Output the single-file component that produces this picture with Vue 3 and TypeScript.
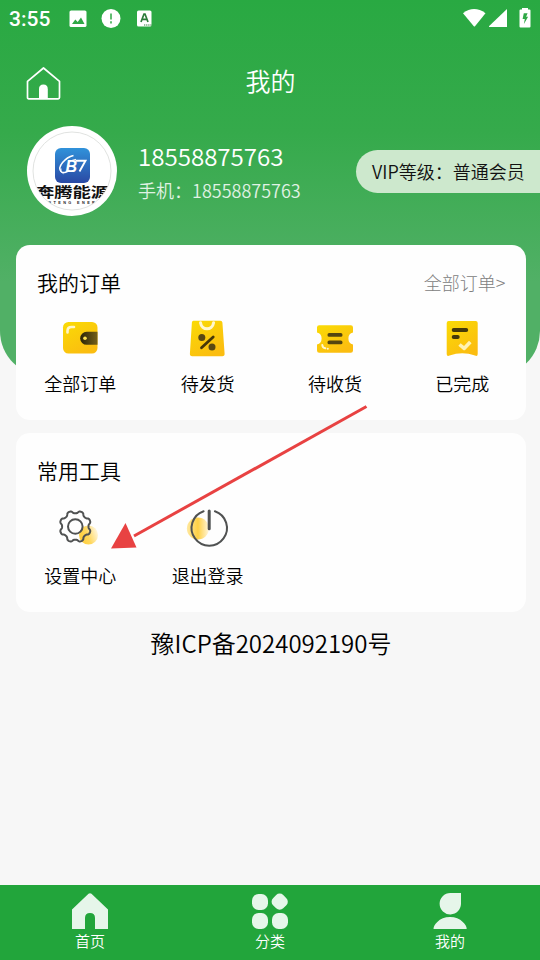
<script setup lang="ts">
interface Entry {
  id: string
  label: string
}

const phone: string = '18558875763'
const orders: Entry[] = [
  { id: 'all', label: '全部订单' },
  { id: 'ship', label: '待发货' },
  { id: 'receive', label: '待收货' },
  { id: 'done', label: '已完成' },
]
const tools: Entry[] = [
  { id: 'settings', label: '设置中心' },
  { id: 'logout', label: '退出登录' },
]
const tabs: Entry[] = [
  { id: 'home', label: '首页' },
  { id: 'category', label: '分类' },
  { id: 'mine', label: '我的' },
]

// Outline of an eight-lobed gear centred on the origin
function gearOutline(): string {
  const points: string[] = []
  for (let i = 0; i < 144; i++) {
    const a = (i / 144) * Math.PI * 2
    const wave = -Math.cos(8 * a)
    const r = 14.5 + 1.4 * Math.tanh(1.6 * wave)
    points.push(`${(r * Math.cos(a)).toFixed(2)} ${(r * Math.sin(a)).toFixed(2)}`)
  }
  return `M${points.join('L')}z`
}
const gear: string = gearOutline()
</script>

<template>
  <div class="page">
    <svg class="defs" width="0" height="0" aria-hidden="true">
      <defs>
        <linearGradient id="gold" x1="0" y1="0" x2="0.6" y2="1">
          <stop offset="0" stop-color="#fadb05" />
          <stop offset="1" stop-color="#fbbd10" />
        </linearGradient>
        <linearGradient id="dark" x1="0" y1="0" x2="1" y2="0">
          <stop offset="0" stop-color="#2b2508" />
          <stop offset="1" stop-color="#75601a" />
        </linearGradient>
        <linearGradient id="glow" x1="0" y1="0.7" x2="1" y2="0.3">
          <stop offset="0" stop-color="#ffcd35" />
          <stop offset="0.45" stop-color="#ffd75c" />
          <stop offset="1" stop-color="#fff8e4" />
        </linearGradient>
        <linearGradient id="glowLeft" x1="0" y1="0" x2="1" y2="0">
          <stop offset="0" stop-color="#ffe9a2" />
          <stop offset="0.5" stop-color="#ffd044" />
          <stop offset="1" stop-color="#fff6dd" />
        </linearGradient>
        <linearGradient id="brand" x1="0" y1="0" x2="0" y2="1">
          <stop offset="0" stop-color="#3092da" />
          <stop offset="1" stop-color="#2a49a4" />
        </linearGradient>
      </defs>
    </svg>

    <header class="hero">
      <div class="status">
        <span class="clock">3:55</span>
        <svg class="st-image" width="18" height="18" viewBox="0 0 18 18">
          <rect x="0.5" y="0.5" width="17" height="16.5" rx="1.6" fill="#fff" />
          <path d="M3 14l3.3-4.6 2.4 2.7 3.3-4.5 3.5 6.4z" fill="#2fa846" />
        </svg>
        <svg class="st-alert" width="20" height="20" viewBox="0 0 20 20">
          <circle cx="10" cy="9.5" r="9.5" fill="#fff" />
          <path d="M10 4.500v6M10 12.300v2.200" stroke="#62bd72" stroke-width="2" />
        </svg>
        <svg class="st-font" width="16" height="18" viewBox="0 0 16 18">
          <rect x="0" y="0.500" width="14.500" height="16" rx="1.600" fill="#fff" />
          <path d="M4 12l3-8h1l3 8M5.200 9.300h4.600" fill="none" stroke="#2d7c3b" stroke-width="1.700" />
          <path d="M7 15h7.500" stroke="#2d7c3b" stroke-width="1" stroke-dasharray="1.300 0.800" />
        </svg>
        <span class="grow"></span>
        <svg width="24" height="20" viewBox="0 0 24 20">
          <path d="M0 4.200Q11-4.200 22.500 4.200L12 17.200q-.6.700-1.200 0z" fill="#fff" />
        </svg>
        <svg class="st-signal" width="19" height="19" viewBox="0 0 19 19">
          <path d="M18 0V18H.2q-.700-.400 0-1.100z" fill="#fff" />
        </svg>
        <svg class="st-battery" width="12" height="21" viewBox="0 0 12 21">
          <path d="M3 1.500V0h6v1.500h1.500q1 0 1 1v16q0 1-1 1h-9q-1 0-1-1v-16q0-1 1-1z" fill="#fff" />
          <path d="M4.800 5.200h3.800L7.100 8.700h2L4.900 16l.9-5H3.600z" fill="#2fa846" />
        </svg>
      </div>

      <div class="title-bar">
        <svg class="home" width="36" height="36" viewBox="0 0 36 36">
          <path d="M2.500 15.300 18.500 2l16 13.300V31.500q0 1.300-1.300 1.300H3.800q-1.300 0-1.300-1.300z" fill="none" stroke="#fff" stroke-width="1.700" stroke-linejoin="round" />
          <path d="M14 33V23.200q0-4.600 4.400-4.600t4.400 4.600V33z" fill="#fff" />
        </svg>
        <h1>我的</h1>
      </div>

      <div class="profile">
        <div class="avatar">
          <svg width="90" height="90" viewBox="0 0 90 90">
            <defs><clipPath id="face"><circle cx="45" cy="45" r="38.7" /></clipPath></defs>
            <circle cx="45" cy="45" r="45" fill="#fff" />
            <circle cx="45" cy="45" r="39" fill="none" stroke="#d3d6d3" stroke-width="0.7" />
            <g clip-path="url(#face)">
              <rect x="28" y="22" width="35" height="35" rx="6" fill="url(#brand)" />
              <path d="M46.500 29.500C38 31.500 30 41 34 45.500c2.500 2.600 7 0 8.500-1.500" fill="none" stroke="#fff" stroke-width="1.500" />
              <text x="38.500" y="46" class="mono">B</text>
              <path d="M48.500 34.700H58.500L52.500 45.500" fill="none" stroke="#fff" stroke-width="1.900" />
              <path d="M41 35.500l8-2.200M34 42.500q-1.500 3.500 2.500 5.200" fill="none" stroke="#fff" stroke-width="1" />
              <text transform="translate(45.500 71.200) scale(1 0.76)" class="brand-name">奔腾能源</text>
              <text x="46" y="78" class="brand-sub">ENTENG ENERG</text>
            </g>
          </svg>
        </div>
        <div class="who">
          <div class="name">{{ phone }}</div>
          <div class="phone">手机：{{ phone }}</div>
        </div>
        <div class="vip">VIP等级：普通会员</div>
      </div>
    </header>

    <main>
      <section class="card orders">
        <div class="card-head">
          <h2>我的订单</h2>
          <span class="more">全部订单&gt;</span>
        </div>
        <div class="grid">
          <div v-for="item in orders" :key="item.id" class="cell">
            <svg v-if="item.id === 'all'" width="40" height="40" viewBox="0 0 40 40">
              <rect x="3" y="4" width="34.500" height="31.500" rx="5.500" fill="url(#gold)" />
              <path d="M37.500 13.800H26.700a6.500 6.500 0 0 0 0 13h10.800z" fill="url(#dark)" />
              <circle cx="25" cy="20.300" r="1.800" fill="#ffe352" />
              <path d="M7.500 14.500v-1.600q0-3.900 4-3.900H14" fill="none" stroke="#fff6c8" stroke-width="2.600" stroke-linecap="round" />
            </svg>
            <svg v-else-if="item.id === 'ship'" width="40" height="40" viewBox="0 0 40 40">
              <path d="M5.400 2.800h27q1.800 0 2 1.800l2.200 31q.2 2.700-2.300 2.700H4.200q-2.500 0-2.300-2.700l2-31q.1-1.800 1.500-1.800z" fill="url(#gold)" />
              <path d="M12.500 4.800c1.200 8 11.800 8 13.100 0" fill="none" stroke="#fff7d0" stroke-width="3" stroke-linecap="round" />
              <circle cx="13.800" cy="19.600" r="3.500" fill="#594813" />
              <circle cx="24" cy="29" r="3.500" fill="#594813" />
              <path d="M13.500 29.700 25.200 19" stroke="#453709" stroke-width="2.800" stroke-linecap="round" />
            </svg>
            <svg v-else-if="item.id === 'receive'" width="40" height="40" viewBox="0 0 40 40">
              <path d="M4.200 7.300h31.600q2.200 0 2.200 2.200v5.100q-4.600 1-4.600 5.900t4.600 5.900v6.100q0 2.200-2.200 2.200H4.200Q2 34.700 2 32.500v-6.100q4.600-1 4.600-5.900T2 14.600V9.500q0-2.200 2.200-2.200z" fill="url(#gold)" />
              <path d="M14.300 16.900h11.400M14.300 24.400h11.400" stroke="#544510" stroke-width="3.700" stroke-linecap="round" />
              <path d="M7.300 27q.3 3 3 3.300" fill="none" stroke="#fff8cf" stroke-width="2" stroke-linecap="round" />
              <circle cx="12.800" cy="30.700" r="1" fill="#fff8cf" />
            </svg>
            <svg v-else width="40" height="40" viewBox="0 0 40 40">
              <path d="M6.700 3h27q2 0 2 2v31q0 2.800-2.700 1.600-12.800-4.800-25.400 0-2.900 1.100-2.900-1.600V5q0-2 2-2z" fill="url(#gold)" />
              <path d="M11.700 12h12.500M11.700 18.900h4" stroke="#453909" stroke-width="4" stroke-linecap="round" />
              <path d="m17.500 26.500 4.600 3.900 6.200-6.500" fill="none" stroke="#fff2b5" stroke-width="3.600" stroke-linejoin="round" />
            </svg>
            <span>{{ item.label }}</span>
          </div>
        </div>
      </section>

      <section class="card tools">
        <div class="card-head"><h2>常用工具</h2></div>
        <div class="grid">
          <div v-for="item in tools" :key="item.id" class="cell">
            <svg v-if="item.id === 'settings'" width="44" height="42" viewBox="0 0 44 42">
              <circle cx="30.500" cy="28" r="9.500" fill="url(#glow)" />
              <path transform="translate(17.300 19.500)" :d="gear" fill="none" stroke="#505252" stroke-width="2" stroke-linejoin="round" />
              <circle cx="17.300" cy="19.500" r="7.300" fill="none" stroke="#505252" stroke-width="2" />
            </svg>
            <svg v-else width="44" height="42" viewBox="0 0 44 42">
              <circle cx="11.900" cy="21.500" r="11" fill="url(#glowLeft)" />
              <path d="M17.600 4.200A17.700 17.700 0 1 0 28.900 4.200" fill="none" stroke="#505252" stroke-width="2" stroke-linecap="round" />
              <path d="M23.200 4v17.800" stroke="#505252" stroke-width="3" stroke-linecap="round" />
            </svg>
            <span>{{ item.label }}</span>
          </div>
        </div>
      </section>

      <p class="icp">豫ICP备2024092190号</p>
    </main>

    <nav class="tabs">
      <div v-for="tab in tabs" :key="tab.id" class="tab">
        <svg v-if="tab.id === 'home'" width="40" height="38" viewBox="0 0 40 38">
          <path d="M2 17.500 18.500 1.800q1.500-1.200 3 0L38 17.500V37H25V26q0-5-5-5t-5 5v11H2z" fill="#e6f6ea" />
        </svg>
        <svg v-else-if="tab.id === 'category'" width="40" height="38" viewBox="0 0 40 38">
          <g fill="#e6f6ea">
            <rect x="2" y="2" width="16" height="16" rx="6.500" />
            <rect x="2" y="21" width="16" height="16" rx="6.500" />
            <rect x="22" y="21" width="16" height="16" rx="6.500" />
            <rect x="22.500" y="2.500" width="14.400" height="14.400" rx="5" transform="rotate(45 29.700 9.700)" />
          </g>
        </svg>
        <svg v-else width="40" height="38" viewBox="0 0 40 38">
          <path d="M20.300 1H31v10.300A10.700 10.700 0 1 1 20.300 1zM3.500 37q0-3.300 3.800-7Q12 25 20 25t12.800 5q3.900 3.600 3.900 7z" fill="#e6f6ea" />
        </svg>
        <span>{{ tab.label }}</span>
      </div>
    </nav>

    <svg class="pointer" width="258" height="146" viewBox="0 0 258 146">
      <path d="M256.500 1.500 24 131" stroke="#e84242" stroke-width="3" />
      <path d="M1 143.500 15.500 118 26.500 142.500z" fill="#e84242" />
    </svg>
  </div>
</template>

<style>
body {
  background: #f7f7f7;
}
</style>

<style scoped>
.page {
  position: relative;
  display: flex;
  flex-direction: column;
  width: 540px;
  height: 960px;
  overflow: hidden;
  background: #f7f7f7;
  color: #000;
  font-family: "Noto Sans CJK SC DemiLight", "Noto Sans CJK SC", sans-serif;
  font-weight: 350;
}
.page svg {
  display: block;
  flex: none;
}
.page .defs {
  position: absolute;
}
h1,
h2,
p {
  margin: 0;
  font-weight: inherit;
}
.hero {
  box-sizing: border-box;
  flex: none;
  height: 376px;
  margin-bottom: -131px;
  border-radius: 0 0 45px 45px;
  background: linear-gradient(#29a942, #35aa4b 35%, #51b066 75%);
  color: #fff;
}
.status {
  display: flex;
  align-items: center;
  height: 37px;
  padding: 0 9px;
}
.clock {
  width: 60px;
  font: 500 21px/36px Roboto, sans-serif;
}
.st-alert {
  margin-left: 14px;
}
.st-font {
  margin-left: 16px;
}
.grow {
  flex: 1;
}
.st-signal {
  margin-left: 2px;
}
.st-battery {
  margin-left: 11px;
}
.title-bar {
  display: grid;
  grid-template-columns: 36px 1fr 36px;
  align-items: center;
  height: 89px;
  padding: 0 24px 0 25px;
}
.home {
  margin-top: 5px;
}
h1 {
  padding-bottom: 3px;
  text-align: center;
  font-size: 25px;
  line-height: 36px;
}
.profile {
  display: flex;
  height: 90px;
  padding-left: 27px;
}
.mono {
  font: italic 700 16px "Liberation Sans", sans-serif;
  fill: #fff;
}
.brand-name {
  font-family: "Noto Sans CJK SC", sans-serif;
  font-size: 18.300px;
  font-weight: 700;
  text-anchor: middle;
  fill: #111;
}
.brand-sub {
  font: 700 3.800px "Liberation Sans", sans-serif;
  letter-spacing: 2.400px;
  text-anchor: middle;
  fill: #222;
}
.who {
  flex: 1;
  padding: 12px 0 0 21px;
}
.name {
  font-size: 24.100px;
  line-height: 36px;
}
.phone {
  font-size: 18px;
  line-height: 32px;
  color: #e0f2e4;
}
.vip {
  width: 168px;
  height: 43px;
  margin-top: 24px;
  padding-left: 16px;
  border-radius: 22px 0 0 22px;
  background: #cde8cd;
  color: #111;
  font-size: 18px;
  line-height: 43px;
  white-space: nowrap;
}
main {
  display: flex;
  flex: 1;
  flex-direction: column;
  gap: 13px;
  padding: 0 14px 0 16px;
}
.card {
  box-sizing: border-box;
  border-radius: 14px;
  background: #fefefe;
}
.orders {
  height: 175px;
}
.tools {
  height: 179px;
}
.card-head {
  display: flex;
  align-items: center;
  justify-content: space-between;
  height: 73px;
  padding: 0 20.500px 0 21px;
}
.card-head h2 {
  font-size: 21px;
  line-height: 30px;
}
.more {
  color: #808080;
  font-family: "Noto Sans CJK SC", sans-serif;
  font-size: 18px;
  font-weight: 300;
}
.grid {
  display: grid;
  grid-template-columns: repeat(4, 127.300px);
  padding-left: 0.700px;
}
.cell {
  display: flex;
  flex-direction: column;
  align-items: center;
  gap: 12px;
  font-size: 18px;
  line-height: 27px;
}
.tools .card-head {
  height: 74px;
}
.tools .cell {
  gap: 13px;
}
.icp {
  font-size: 24px;
  line-height: 36px;
  text-align: center;
}
.tabs {
  display: grid;
  flex: none;
  grid-template-columns: repeat(3, 1fr);
  height: 75px;
  background: #22a53b;
  color: #fff;
}
.tab {
  display: flex;
  flex-direction: column;
  align-items: center;
  padding-top: 7px;
  font-size: 15px;
  line-height: 22px;
}
.pointer {
  position: absolute;
  top: 405px;
  left: 110px;
}
</style>
